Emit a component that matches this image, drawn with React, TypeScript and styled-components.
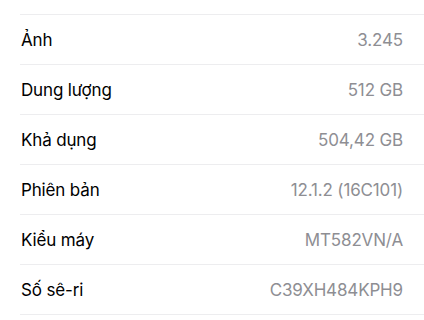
import { ReactElement } from 'react';
import styled, { createGlobalStyle } from 'styled-components';

const GlobalStyle = createGlobalStyle`
  html, body {
    margin: 0;
    padding: 0;
    background: #ffffff;
  }

  body {
    font-family: Inter, "Noto Sans", "Liberation Sans", sans-serif;
    -webkit-font-smoothing: antialiased;
  }
`;

const Wrapper = styled.div`
  width: 424px;
  height: 320px;
  overflow: hidden;
  background: #ffffff;

  padding-top: 14px;
  box-sizing: border-box;
`;

const List = styled.ul`
  list-style: none;
  padding: 0;
  margin: 0 0 0 20px;

  border-bottom: 1px solid #ededef;
`;

const Row = styled.li`
  display: flex;
  align-items: center;
  justify-content: space-between;

  height: 50px;
  box-sizing: border-box;
  padding: 0 21px 0 1px;

  border-top: 1px solid #ededef;

  font-size: 17px;
  letter-spacing: -0.15px;
`;

const Label = styled.span`
  color: #000000;
`;

const Value = styled.span`
  color: #8e8e93;
`;

interface InfoItem {
  label: string;
  value: string;
}

const items: InfoItem[] = [
  { label: 'Ảnh', value: '3.245' },
  { label: 'Dung lượng', value: '512 GB' },
  { label: 'Khả dụng', value: '504,42 GB' },
  { label: 'Phiên bản', value: '12.1.2 (16C101)' },
  { label: 'Kiểu máy', value: 'MT582VN/A' },
  { label: 'Số sê-ri', value: 'C39XH484KPH9' },
];

/**
 * Device info list
 */
export default function App(): ReactElement {
  return (
    <Wrapper>
      <GlobalStyle />
      <List>
        {items.map((item) => (
          <Row key={item.label}>
            <Label>{item.label}</Label>
            <Value>{item.value}</Value>
          </Row>
        ))}
      </List>
    </Wrapper>
  );
}
